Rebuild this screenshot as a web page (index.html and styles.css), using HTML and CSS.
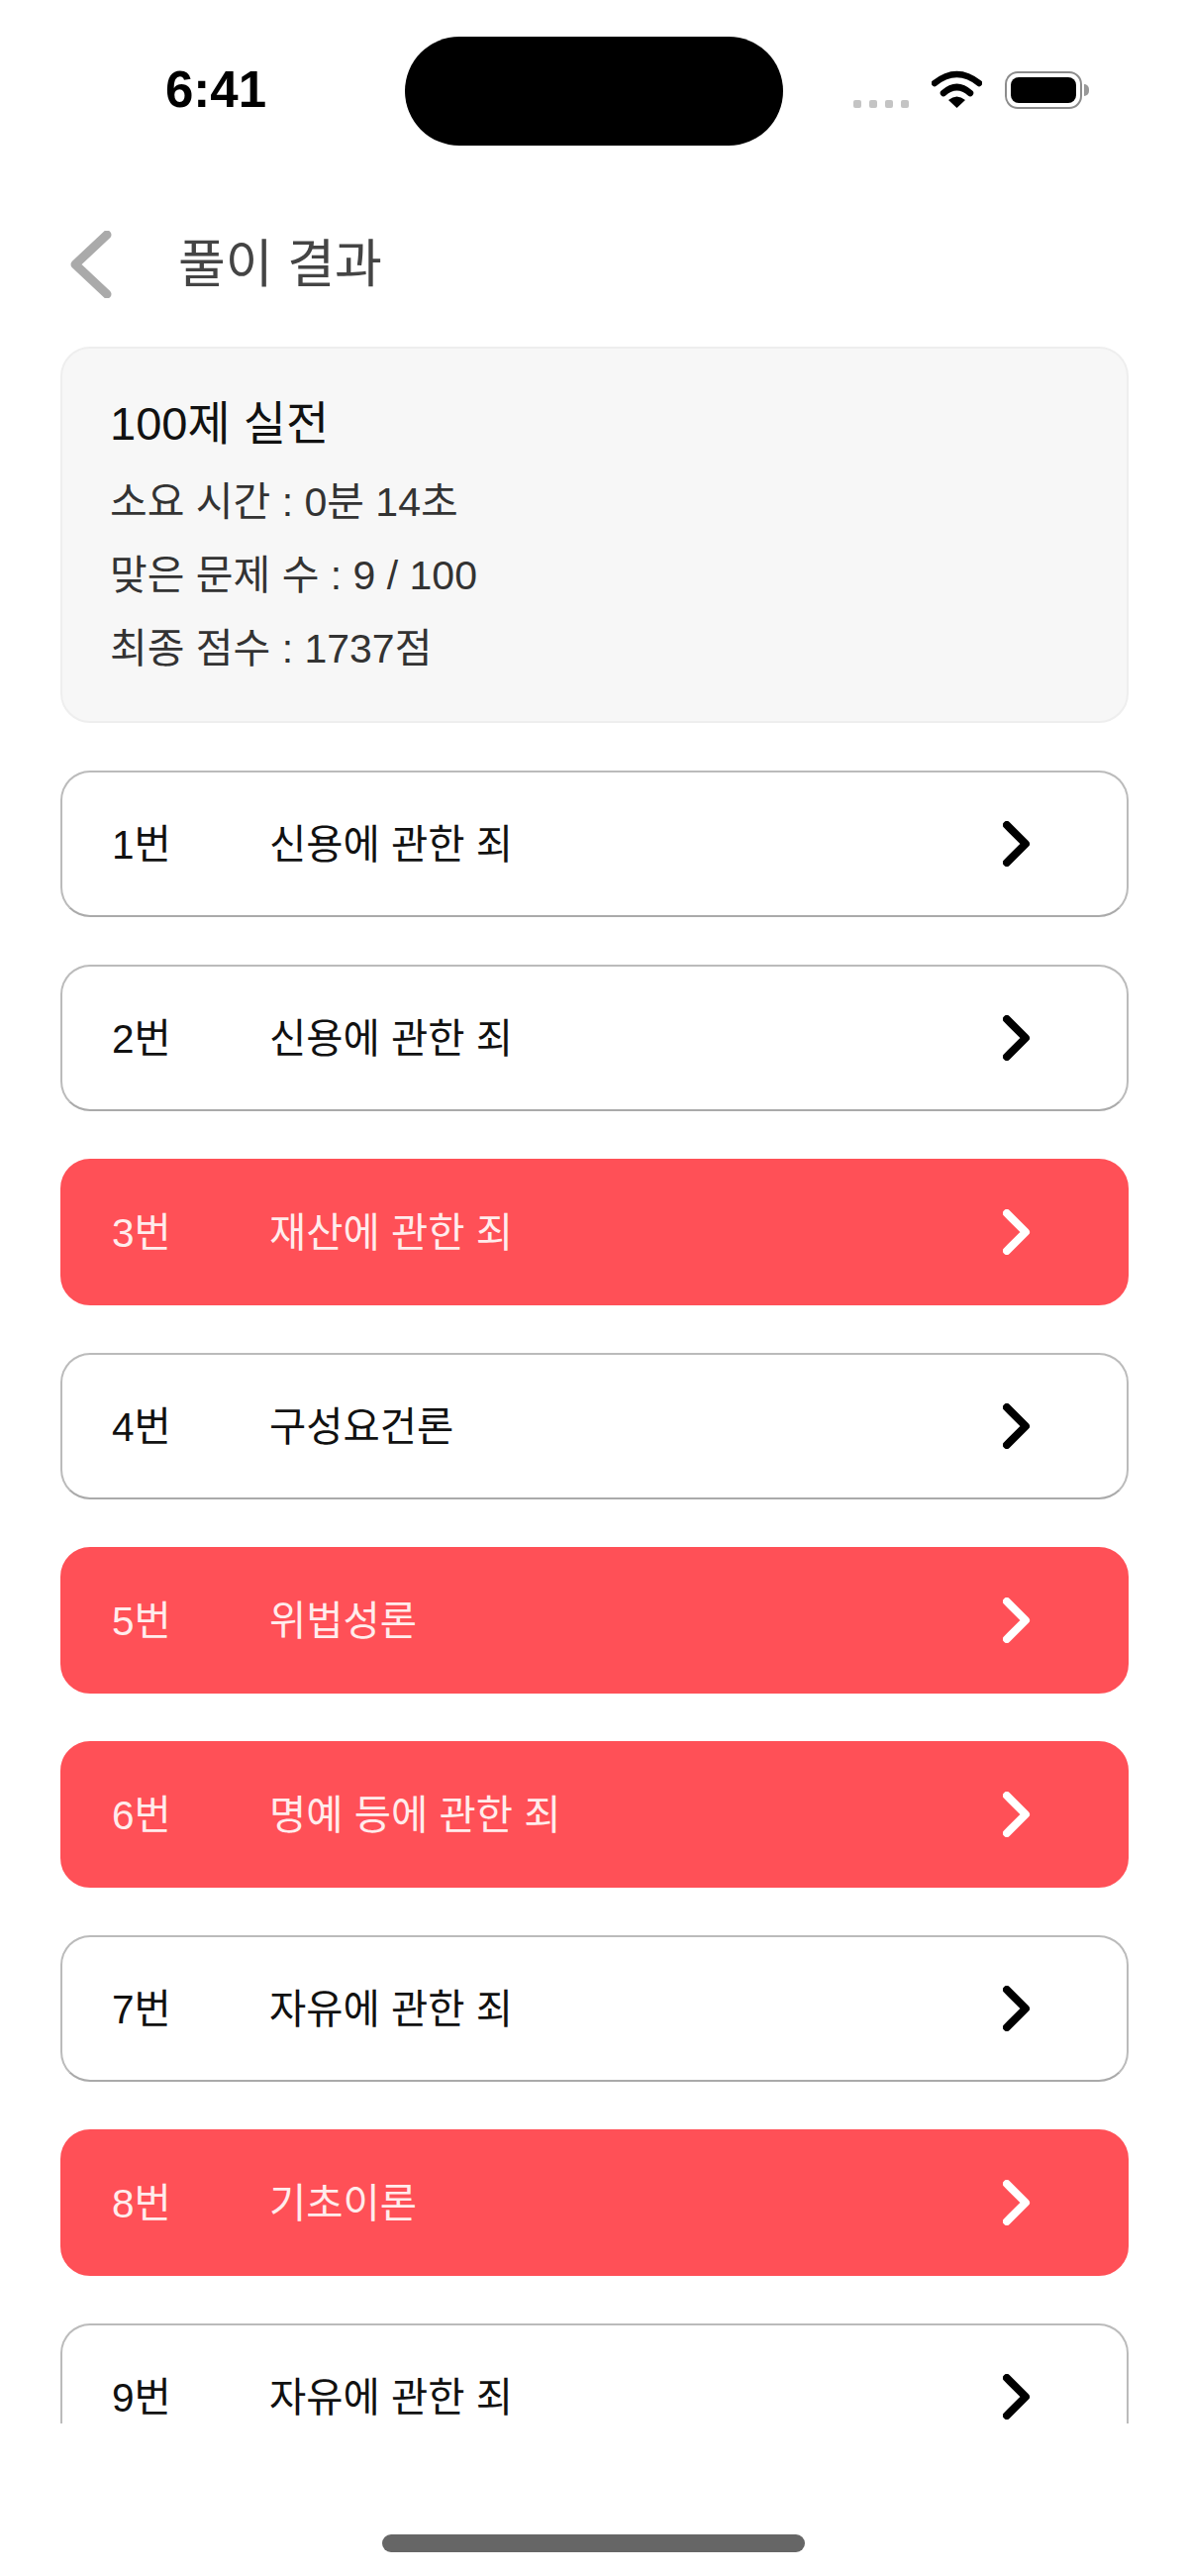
FILE: index.html
```html
<!DOCTYPE html>
<html lang="ko">
<head>
    <meta charset="UTF-8">
    <meta name="viewport" content="width=device-width, initial-scale=1.0">
    <title>풀이 결과</title>
    <link rel="stylesheet" href="styles.css">
</head>
<body>
<div class="screen">
    <div class="status-bar">
        <div class="time">6:41</div>
        <div class="island"></div>
        <div class="status-icons">
            <div class="signal-dots"><span></span><span></span><span></span><span></span></div>
            <svg class="wifi" width="51" height="38" viewBox="0 0 51 38">
                <path d="M3 13 Q25.5 -5 48 13" fill="none" stroke="#000" stroke-width="6.5" stroke-linecap="round"/>
                <path d="M12 23 Q25.5 11 39 23" fill="none" stroke="#000" stroke-width="6.5" stroke-linecap="round"/>
                <path d="M17 30 Q25.5 23 34 30 L25.5 38 Z" fill="#000"/>
            </svg>
            <div class="battery"><div class="battery-fill"></div></div>
        </div>
    </div>

    <div class="header">
        <svg class="back" width="42" height="68" viewBox="0 0 42 68">
            <path d="M37 4 L5 34 L37 64" fill="none" stroke="#aaa" stroke-width="9" stroke-linecap="round" stroke-linejoin="round"/>
        </svg>
        <h1>풀이 결과</h1>
    </div>

    <div class="summary">
        <h2>100제 실전</h2>
        <p>소요 시간 : 0분 14초</p>
        <p>맞은 문제 수 : 9 / 100</p>
        <p>최종 점수 : 1737점</p>
    </div>

    <ul class="result-list">
        <li class="result"><span class="num">1번</span><span class="name">신용에 관한 죄</span>
            <svg class="arrow" width="28" height="46" viewBox="0 0 28 46"><path d="M4 4 L23 23 L4 42"/></svg></li>
        <li class="result"><span class="num">2번</span><span class="name">신용에 관한 죄</span>
            <svg class="arrow" width="28" height="46" viewBox="0 0 28 46"><path d="M4 4 L23 23 L4 42"/></svg></li>
        <li class="result wrong"><span class="num">3번</span><span class="name">재산에 관한 죄</span>
            <svg class="arrow" width="28" height="46" viewBox="0 0 28 46"><path d="M4 4 L23 23 L4 42"/></svg></li>
        <li class="result"><span class="num">4번</span><span class="name">구성요건론</span>
            <svg class="arrow" width="28" height="46" viewBox="0 0 28 46"><path d="M4 4 L23 23 L4 42"/></svg></li>
        <li class="result wrong"><span class="num">5번</span><span class="name">위법성론</span>
            <svg class="arrow" width="28" height="46" viewBox="0 0 28 46"><path d="M4 4 L23 23 L4 42"/></svg></li>
        <li class="result wrong"><span class="num">6번</span><span class="name">명예 등에 관한 죄</span>
            <svg class="arrow" width="28" height="46" viewBox="0 0 28 46"><path d="M4 4 L23 23 L4 42"/></svg></li>
        <li class="result"><span class="num">7번</span><span class="name">자유에 관한 죄</span>
            <svg class="arrow" width="28" height="46" viewBox="0 0 28 46"><path d="M4 4 L23 23 L4 42"/></svg></li>
        <li class="result wrong"><span class="num">8번</span><span class="name">기초이론</span>
            <svg class="arrow" width="28" height="46" viewBox="0 0 28 46"><path d="M4 4 L23 23 L4 42"/></svg></li>
        <li class="result"><span class="num">9번</span><span class="name">자유에 관한 죄</span>
            <svg class="arrow" width="28" height="46" viewBox="0 0 28 46"><path d="M4 4 L23 23 L4 42"/></svg></li>
    </ul>

    <div class="home-bar"></div>
</div>
</body>
</html>
```

FILE: styles.css
```css
* {
    box-sizing: border-box;
}

body {
    margin: 0;
    background: #fff;
    font-family: "Liberation Sans", "Noto Sans CJK KR", sans-serif;
    color: #111;
}

.screen {
    width: 1200px;
    height: 2601px;
    overflow: hidden;
}

.status-bar {
    display: grid;
    grid-template-columns: 409px 382px 1fr;
    align-items: center;
    height: 110px;
    margin-top: 37px;
}

.time {
    padding: 0 0 3px 167px;
    font-size: 51px;
    font-weight: 700;
    color: #000;
}

.island {
    height: 110px;
    border-radius: 55px;
    background: #000;
}

.status-icons {
    display: flex;
    align-items: center;
    padding-left: 71px;
}

.signal-dots {
    display: flex;
    gap: 8px;
    margin-top: 26px;
}

.signal-dots span {
    width: 8px;
    height: 8px;
    border-radius: 2px;
    background: #c4c4c4;
}

.wifi {
    margin-left: 23px;
    margin-top: -4px;
}

.battery {
    position: relative;
    width: 78px;
    height: 38px;
    margin-left: 23px;
    margin-top: -2px;
    padding: 4px;
    border: 2px solid #8c8c8c;
    border-radius: 13px;
}

.battery::after {
    content: "";
    position: absolute;
    top: 11px;
    right: -9px;
    width: 5px;
    height: 12px;
    border-radius: 0 5px 5px 0;
    background: #999;
}

.battery-fill {
    height: 100%;
    border-radius: 8px;
    background: #000;
}

.header {
    display: flex;
    align-items: center;
    gap: 67px;
    padding: 86px 0 0 71px;
}

.header h1 {
    margin: 0;
    font-size: 52px;
    font-weight: 400;
    line-height: 68px;
    color: #444;
}

.summary {
    width: 1079px;
    height: 380px;
    margin: 49px 0 0 61px;
    padding: 39px 48px 0;
    border: 2px solid #eee;
    border-radius: 30px;
    background: #f7f7f7;
}

.summary h2 {
    margin: 0 0 5px;
    font-size: 47px;
    font-weight: 400;
    line-height: 74px;
    color: #111;
}

.summary p {
    margin: 0;
    font-size: 41px;
    line-height: 74px;
    color: #333;
}

.result-list {
    display: flex;
    flex-direction: column;
    gap: 48px;
    width: 1079px;
    height: 1669px;
    margin: 48px 0 0 61px;
    padding: 0;
    overflow: hidden;
    list-style: none;
}

.result {
    display: flex;
    flex: none;
    align-items: center;
    height: 148px;
    padding: 0 97px 0 50px;
    border: 2px solid #bbb;
    border-bottom-color: #aaa;
    border-radius: 30px;
    background: #fff;
    font-size: 40.5px;
}

.result.wrong {
    border-color: #ff5057;
    background: #ff5057;
    color: #ffecec;
}

.num {
    width: 159px;
    padding-bottom: 6px;
}

.name {
    padding-bottom: 6px;
}

.arrow {
    margin-left: auto;
    fill: none;
    stroke: #000;
    stroke-width: 8;
    stroke-linecap: round;
    stroke-linejoin: round;
}

.wrong .arrow {
    stroke: #fff;
}

.home-bar {
    width: 427px;
    height: 18px;
    margin: 112px 0 0 386px;
    border-radius: 9px;
    background: #666;
}
```
